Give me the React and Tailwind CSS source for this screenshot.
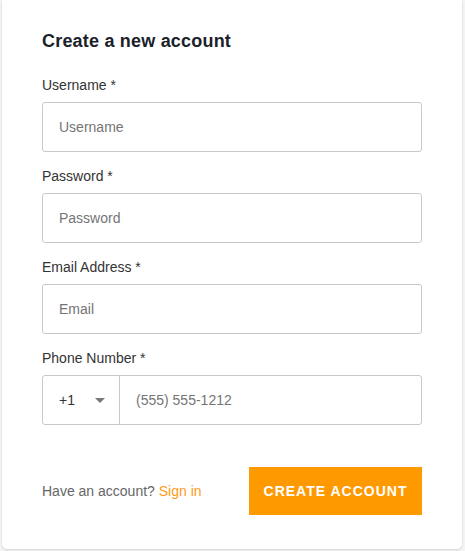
import React from "react";

const Field = ({ label, placeholder, type = "text" }) => {
  return (
    <div className="mb-[14px]">
      <label className="block text-[14px] leading-5 text-[#333] mb-[7px]">{label}</label>
      <input
        type={type}
        placeholder={placeholder}
        className="w-full h-[50px] px-4 border border-[#c8c8c8] rounded-[3px] text-[14px] text-[#333] placeholder:text-[#757575] outline-none"
      />
    </div>
  );
};

const App = () => {
  return (
    <div
      className="min-h-[551px] bg-[#f5f5f5] pl-[2px]"
      style={{ fontFamily: '"Liberation Sans", Arial, sans-serif' }}
    >
      <div className="w-[460px] bg-white rounded-b-[5px] shadow-[0_1px_3px_rgba(0,0,0,0.15)] px-10 pt-[29px] pb-[34px]">
        <h1 className="text-[18px] leading-6 font-bold tracking-[0.2px] text-[#1b2129] mb-[22px]">
          Create a new account
        </h1>

        <Field label="Username *" placeholder="Username" />
        <Field label="Password *" placeholder="Password" type="password" />
        <Field label="Email Address *" placeholder="Email" />

        <div>
          <label className="block text-[14px] leading-5 text-[#333] mb-[7px]">Phone Number *</label>
          <div className="flex h-[50px] border border-[#c8c8c8] rounded-[3px]">
            <div className="w-[77px] flex items-center justify-between pl-4 pr-[14px] border-r border-[#c8c8c8] text-[14px] text-[#333]">
              <span>+1</span>
              <svg width="10" height="5" viewBox="0 0 10 5">
                <path d="M0 0 L10 0 L5 5 Z" fill="#777" />
              </svg>
            </div>
            <input
              type="tel"
              placeholder="(555) 555-1212"
              className="flex-1 px-4 text-[14px] text-[#333] placeholder:text-[#757575] outline-none"
            />
          </div>
        </div>

        <div className="flex items-center justify-between mt-[42px]">
          <p className="text-[14px] text-[#666]">
            Have an account? <a href="#" className="text-[#ff9a1a]">Sign in</a>
          </p>
          <button className="w-[173px] h-[48px] bg-[#ff9900] text-white text-[14px] font-bold uppercase tracking-[1px]">
            Create Account
          </button>
        </div>
      </div>
    </div>
  );
};

export default App;
